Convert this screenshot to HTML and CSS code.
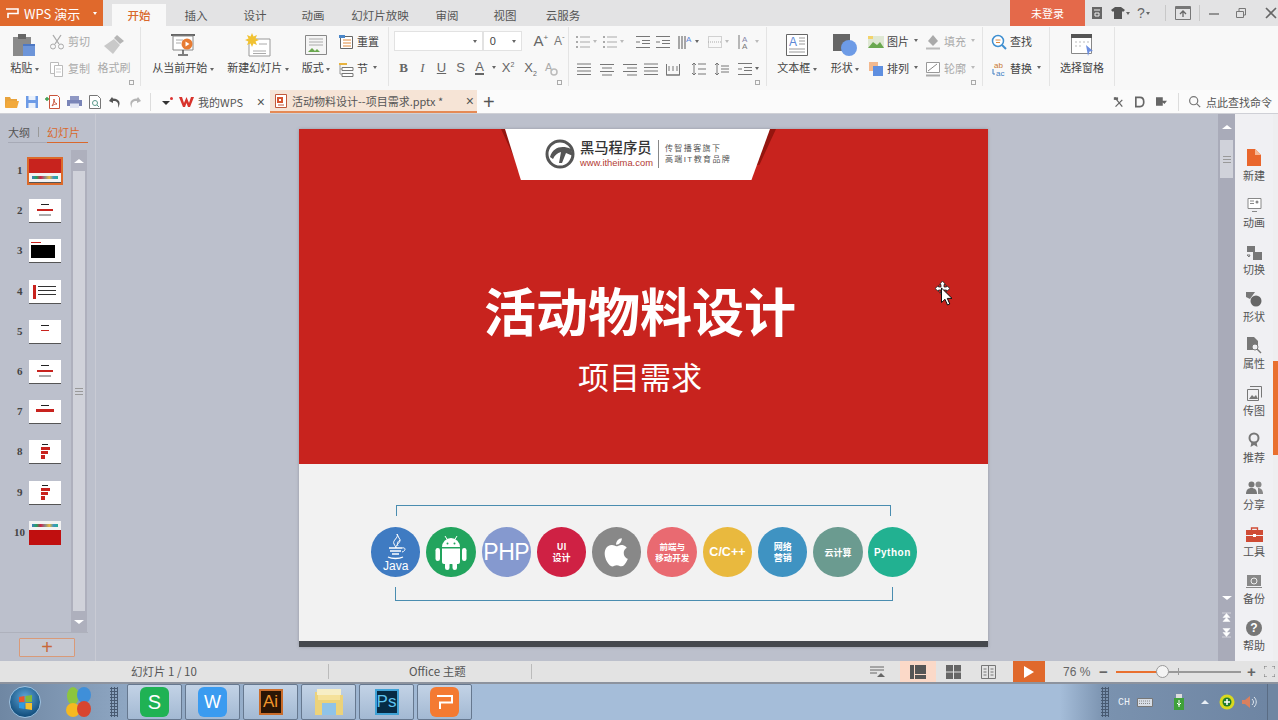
FILE: index.html
```html
<!DOCTYPE html><html lang="zh-CN">
<head>
<meta charset="UTF-8" />
<meta name="viewport" content="width=device-width, initial-scale=1" />
<title>WPS 演示</title>
<link rel="stylesheet" href="styles.css">
</head>
<body>
<svg class="defs" width="0" height="0">
  <symbol id="lines" viewBox="0 0 16 16"><path d="M1 3h14M1 6.500h14M1 10h14M1 13.500h14" stroke="currentColor" fill="none"/></symbol>
  <symbol id="bullets" viewBox="0 0 16 16"><path d="M1 2h2v2H1zM1 7h2v2H1zM1 12h2v2H1z" fill="currentColor"/><path d="M5 3h10M5 8h10M5 13h10" stroke="currentColor" fill="none"/></symbol>
  <symbol id="indent" viewBox="0 0 16 16"><path d="M1 2.500h14M7 6.500h8M7 9.500h8M1 13.500h14M1 8h4" stroke="currentColor" fill="none"/></symbol>
  <symbol id="search" viewBox="0 0 16 16"><circle cx="7" cy="7" r="5" fill="none" stroke="currentColor" stroke-width="1.500"/><path d="M11 11l4 4" stroke="currentColor" stroke-width="1.500"/></symbol>
</svg>

<div class="titlebar">
  <div class="appbtn">
    <svg width="15" height="12" viewBox="0 0 15 12"><path d="M1 2h12v4.500H3V11" fill="none" stroke="#fff" stroke-width="1.600"/></svg>
    <span class="appname">WPS 演示</span><i class="caret white"></i>
  </div>
  <div class="tabs">
    <span class="tab active">开始</span><span class="tab">插入</span><span class="tab">设计</span><span class="tab">动画</span><span class="tab">幻灯片放映</span><span class="tab">审阅</span><span class="tab">视图</span><span class="tab">云服务</span>
  </div>
  <div class="winctl">
    <span class="login">未登录</span>
    <svg class="w1" width="14" height="14" viewBox="0 0 14 14"><path d="M2 1h10v12H2z" fill="#666"/><path d="M4 4h6M5 7h4v3H5z" stroke="#eee" fill="none"/></svg>
    <svg class="w2" width="14" height="12" viewBox="0 0 14 12"><path d="M4 0h6l4 3-2 2-1-1v8H3V4L2 5 0 3z" fill="#555"/></svg><i class="caret"></i>
    <span class="help">?</span><i class="caret"></i>
    <span class="wsep first"></span>
    <svg width="16" height="14" viewBox="0 0 16 14"><path d="M.5.500h15v13H.5z" fill="none" stroke="#777"/><path d="M1 1h14v2H1z" fill="#777"/><path d="M8 11V5M5 8l3-3 3 3" fill="none" stroke="#666" stroke-width="1.300"/></svg>
    <span class="wsep"></span>
    <svg class="w3" width="12" height="12" viewBox="0 0 12 12"><path d="M1 7h10" stroke="#777" stroke-width="1.500"/></svg>
    <svg class="w4" width="12" height="12" viewBox="0 0 12 12"><path d="M1.500 4.500h7v6h-7zM4 4V1.500h6.500V8H9" fill="none" stroke="#777"/></svg>
    <svg class="w5" width="12" height="12" viewBox="0 0 12 12"><path d="M1 1l10 10M11 1L1 11" stroke="#666" stroke-width="1.600"/></svg>
  </div>
</div>

<div class="ribbon">
  <div class="group g1">
    <div class="big w49">
      <svg width="26" height="24" viewBox="0 0 26 24"><path d="M1 4h18v19H1z" fill="#8a8a8a"/><path d="M6 1h8v5H6z" fill="#666"/><path d="M11 11h12v12H11z" fill="#6d95d9"/><path d="M11 11h12v2H11z" fill="#4d78c4"/></svg>
      <span class="lbl">粘贴 <i class="caret"></i></span>
    </div>
    <div class="rows w46">
      <div class="sm off"><svg width="16" height="16" viewBox="0 0 16 16"><path d="M4 1l6 9M12 1L6 10" stroke="#aaa" stroke-width="1.300"/><circle cx="4" cy="12.500" r="2.500" fill="none" stroke="#aaa"/><circle cx="12" cy="12.500" r="2.500" fill="none" stroke="#aaa"/></svg>剪切</div>
      <div class="sm off"><svg width="16" height="16" viewBox="0 0 16 16"><path d="M1.500 1.500h8v11h-8z" fill="#fff" stroke="#bbb"/><path d="M5.500 4.500h8v11h-8z" fill="#fff" stroke="#bbb"/><path d="M7 8h5M7 11h5" stroke="#ccc"/></svg>复制</div>
    </div>
    <div class="big w38 off">
      <svg width="24" height="24" viewBox="0 0 24 24"><path d="M15 2l7 6-4 3-6-6z" fill="#b5b5b5"/><path d="M12 6l6 6-7 9-9-8z" fill="#c9c9c9"/></svg>
      <span class="lbl">格式刷</span>
    </div>
    <i class="launch"></i>
  </div>

  <div class="group g2">
    <div class="big w78">
      <svg width="26" height="24" viewBox="0 0 26 24"><path d="M1 1h24v2H1z" fill="#666"/><path d="M3 3h20v14H3z" fill="#fff" stroke="#888"/><path d="M6 7h7M6 10h5" stroke="#aaa"/><circle cx="17" cy="11" r="5.500" fill="#e77b32"/><path d="M15.500 8.500l4 2.500-4 2.500z" fill="#fff"/><path d="M13 17v4M8 22h10" stroke="#555" stroke-width="1.500"/></svg>
      <span class="lbl">从当前开始 <i class="caret"></i></span>
    </div>
    <div class="big w72">
      <svg width="26" height="24" viewBox="0 0 26 24"><path d="M4 6h21v17H4z" fill="#fff" stroke="#999"/><path d="M8 18h13M8 20.500h13M14 11h8" stroke="#aaa"/><path d="M7 0l1.500 3.500L12 2l-1.500 3.500L14 7l-3.500 1.500L12 12 8.500 10.500 7 14l-1.500-3.500L2 12l1.500-3.500L0 7l3.500-1.500L2 2l3.500 1.500z" fill="#f1c232"/></svg>
      <span class="lbl">新建幻灯片 <i class="caret"></i></span>
    </div>
    <div class="big w44">
      <svg width="24" height="24" viewBox="0 0 24 24"><path d="M1.500 2.500h21v19h-21z" fill="#f5f5f5" stroke="#888"/><path d="M5 6h14M5 9h14M5 12h14" stroke="#aaa"/><path d="M4 19l4-4 3 3 2-2 3 3z" fill="#6aa84f"/></svg>
      <span class="lbl">版式 <i class="caret"></i></span>
    </div>
    <div class="rows">
      <div class="sm"><svg width="16" height="16" viewBox="0 0 16 16"><path d="M2.500 2.500h12v12h-12z" fill="#fff" stroke="#666"/><path d="M5 6h8M5 9h8M5 12h8" stroke="#e08a3c"/><path d="M1 1h6v3H1z" fill="#4a86c8"/></svg>重置</div>
      <div class="sm"><svg width="16" height="16" viewBox="0 0 16 16"><path d="M4 6.500h11v3H4zM4 12.500h11v3H4z" fill="#fff" stroke="#777"/><path d="M1 2h8v2H1z" fill="#e8b33f"/><path d="M2 4v9h2M2 8h2" stroke="#999" fill="none"/></svg>节 <i class="caret"></i></div>
    </div>
  </div>

  <div class="group g3">
    <div class="fontrow">
      <span class="fbox fname"><i class="caret"></i></span>
      <span class="fbox fsize">0<i class="caret"></i></span>
      <span class="grow">A<sup>+</sup></span>
      <span class="grow small">A<sup>-</sup></span>
    </div>
    <div class="fmtrow">
      <b class="serif">B</b><em class="serif">I</em><u>U</u><span>S</span>
      <span class="acolor">A</span><i class="caret"></i>
      <span>X<sup>2</sup></span><span>X<sub>2</sub></span>
      <svg width="16" height="16" viewBox="0 0 16 16"><text x="2" y="11" font-size="11" fill="#aaa" font-family="Liberation Sans">A</text><circle cx="11" cy="12" r="3" fill="none" stroke="#bbb" stroke-width="1.500"/></svg>
    </div>
    <i class="launch"></i>
  </div>

  <div class="group g4">
    <div class="para p1">
      <span class="pc off"><svg width="16" height="16"><use href="#bullets"/></svg><i class="caret"></i></span>
      <span class="pc off"><svg width="16" height="16"><use href="#bullets"/></svg><i class="caret"></i></span>
      <span class="pc"><svg width="16" height="16"><use href="#indent"/></svg></span>
      <span class="pc"><svg width="16" height="16"><use href="#indent"/></svg></span>
      <span class="pc"><svg width="16" height="16" viewBox="0 0 16 16"><path d="M2 2v13M5 2v13M8 2v13" stroke="#555"/><text x="9" y="8" font-size="8" fill="#5b87d6" font-family="Liberation Sans">A</text></svg><i class="caret"></i></span>
      <span class="pc off"><svg width="16" height="16" viewBox="0 0 16 16"><path d="M1.500 2.500h13v11h-13z" fill="none" stroke="#aaa" stroke-dasharray="1 1"/><path d="M1 8h14" stroke="#aaa" stroke-dasharray="1 1"/></svg><i class="caret"></i></span>
      <span class="pc off"><svg width="16" height="16" viewBox="0 0 16 16"><path d="M2 1v14" stroke="#777"/><text x="5" y="8" font-size="8" fill="#88a" font-family="Liberation Sans">A</text><text x="5" y="15" font-size="8" fill="#777" font-family="Liberation Sans">A</text></svg><i class="caret"></i></span>
    </div>
    <div class="para p2">
      <svg width="16" height="16"><use href="#lines"/></svg>
      <svg width="16" height="16" viewBox="0 0 16 16"><path d="M1 3.500h14M3 7h10M1 10.500h14M3 14h10" stroke="currentColor"/></svg>
      <svg width="16" height="16" viewBox="0 0 16 16"><path d="M1 3.500h14M5 7h10M1 10.500h14M5 14h10" stroke="currentColor"/></svg>
      <svg width="16" height="16"><use href="#lines"/></svg>
      <svg width="16" height="16" viewBox="0 0 16 16"><path d="M1.500 3v11h13V3M1 14h14M4 5v5M8 5v5M12 5v5" fill="none" stroke="currentColor"/></svg>
      <svg width="16" height="16" viewBox="0 0 16 16"><path d="M3 2v12M1 4l2-2 2 2M1 12l2 2 2-2M7 3h8M7 8h8M7 13h8" fill="none" stroke="currentColor"/></svg>
      <svg width="16" height="16" viewBox="0 0 16 16"><path d="M3 2v12M1 4l2-2 2 2M1 12l2 2 2-2M7 5h8M7 8h8M7 11h8" fill="none" stroke="currentColor"/></svg>
      <span class="pc"><svg width="16" height="16"><use href="#indent"/></svg><i class="caret"></i></span>
    </div>
    <i class="launch"></i>
  </div>

  <div class="group g5">
    <div class="big w60">
      <svg width="24" height="24" viewBox="0 0 24 24"><path d="M1.500 1.500h21v21h-21z" fill="#fff" stroke="#666"/><text x="4" y="13" font-size="12" fill="#5b87d6" font-family="Liberation Sans">A</text><path d="M14 5h6M14 8h6M14 11h6M4 16h16M4 19h16" stroke="#999"/></svg>
      <span class="lbl">文本框 <i class="caret"></i></span>
    </div>
    <div class="big w36">
      <svg width="26" height="24" viewBox="0 0 26 24"><path d="M1 1h17v17H1z" fill="#666"/><circle cx="17" cy="15" r="8" fill="#6d9be6"/></svg>
      <span class="lbl">形状 <i class="caret"></i></span>
    </div>
    <div class="rows shapes1">
      <div class="sm"><svg width="16" height="16" viewBox="0 0 16 16"><path d="M0 2h16v12H0z" fill="#dfe8d4"/><path d="M0 14l5-6 4 3 3-3 4 6z" fill="#6aa84f"/><path d="M0 2h5v3H0z" fill="#f3d36b"/></svg>图片 <i class="caret"></i></div>
      <div class="sm"><svg width="16" height="16" viewBox="0 0 16 16"><path d="M1 1h9v9H1z" fill="#f3b98f"/><path d="M5 5h10v10H5z" fill="#5f8fe0"/></svg>排列 <i class="caret"></i></div>
    </div>
    <div class="rows shapes2 off">
      <div class="sm"><svg width="16" height="16" viewBox="0 0 16 16"><path d="M8 1l5 6-5 5-5-5z" fill="#aaa"/><path d="M1 13.500h14v2H1z" fill="#bbb"/></svg>填充 <i class="caret"></i></div>
      <div class="sm"><svg width="16" height="16" viewBox="0 0 16 16"><path d="M1.500 1.500h13v10h-13z" fill="#fff" stroke="#999"/><path d="M3 10l9-7" stroke="#888"/><path d="M1 13.500h14v2H1z" fill="#aaa"/></svg>轮廓 <i class="caret"></i></div>
    </div>
    <i class="launch"></i>
  </div>

  <div class="group g6">
    <div class="rows">
      <div class="sm"><svg width="16" height="16" viewBox="0 0 16 16"><circle cx="7" cy="7" r="5.500" fill="#fff" stroke="#3f8fd0" stroke-width="1.500"/><path d="M11 11l4 4" stroke="#3f8fd0" stroke-width="2"/><path d="M4.500 6h5M5 8.500h4" stroke="#e08a3c"/></svg>查找</div>
      <div class="sm"><svg class="repl" width="16" height="16" viewBox="0 0 16 16"><text x="3" y="7" font-size="8" fill="#c9772f" font-family="Liberation Sans">ab</text><text x="5" y="15" font-size="8" fill="#3f7fc4" font-family="Liberation Sans">ac</text><path d="M2 8v5h2" fill="none" stroke="#3f7fc4"/></svg>替换 <i class="caret"></i></div>
    </div>
  </div>

  <div class="group g7">
    <div class="big w65">
      <svg width="24" height="24" viewBox="0 0 24 24"><path d="M1.500 1.500h20v19h-20z" fill="#fff" stroke="#888"/><path d="M1 1h21v4H1z" fill="#555"/><path d="M5 9h2M9 9h2M13 9h2M17 9h2M5 13h2M9 13h2" stroke="#bbb"/><path d="M16 12l7 6-3.500.5L18 23z" fill="#6d8fe0"/></svg>
      <span class="lbl">选择窗格</span>
    </div>
  </div>
</div>

<div class="quickbar">
  <div class="qicons">
    <svg width="15" height="14" viewBox="0 0 15 14"><path d="M1 2h5l1 2h6v8H1z" fill="#e8a33d"/><path d="M3 6h12l-2 7H1z" fill="#f2a93b"/></svg>
    <svg width="14" height="14" viewBox="0 0 14 14"><path d="M1 1h12v12H1z" fill="#6d9be6"/><path d="M3.500 1h7v4h-7zM3.500 8h7v5h-7z" fill="#eaf1fb"/></svg>
    <svg width="16" height="14" viewBox="0 0 16 14"><path d="M4.500.500h8l2 2v11h-10z" fill="#fff" stroke="#c9543b"/><path d="M7 11c2-3 2-5 2-7 0 3 1 4 3 5-2 0-3 .5-5 2z" fill="none" stroke="#c9543b"/><path d="M0 4h4M2 2v4" stroke="#3a9d4a" stroke-width="1.400"/></svg>
    <svg width="15" height="14" viewBox="0 0 15 14"><path d="M3 1h9v4H3z" fill="#8f98c4"/><path d="M0 5h15v6H0z" fill="#7a85b8"/><path d="M3 8.500h9V13H3z" fill="#dfe3f2"/></svg>
    <svg width="14" height="14" viewBox="0 0 14 14"><path d="M1.500.500h8l3 3v10h-11z" fill="#fff" stroke="#777"/><circle cx="7" cy="8" r="2.500" fill="none" stroke="#5a9a8a"/><path d="M9 10l2 2" stroke="#5a9a8a"/></svg>
    <svg width="14" height="14" viewBox="0 0 14 14"><path d="M4 2L1 6l4 2V6c4-.5 6 2 5 7 3-5 2-9-5-9.500z" fill="#555"/></svg>
    <svg width="14" height="14" viewBox="0 0 14 14"><path d="M10 2l3 4-4 2V6C5 5.500 3 8 4 13 1 8 2 4 9 3.500z" fill="#b5b5b5"/></svg>
    <span class="qsep"></span>
    <span class="qmore"><i class="caret dark"></i><i class="dot"></i></span>
  </div>
  <div class="doctab">
    <svg class="wlogo" width="15" height="12" viewBox="0 0 15 12"><path d="M0 1h3l2 6 2.500-6 2.500 6 2-6h3l-4 10H9L7.500 7 6 11H4z" fill="#d8332c"/></svg>
    <span class="dname">我的WPS</span><span class="close">×</span>
  </div>
  <div class="doctab current">
    <svg width="12" height="14" viewBox="0 0 12 14"><path d="M.5.500h11v13H.5z" fill="#fff" stroke="#c0593a"/><path d="M2 3h6v6H2z" fill="#d7552f"/><path d="M4 5h2v2H4z" fill="#fff"/><path d="M3 11h6" stroke="#c0593a"/></svg>
    <span class="dname">活动物料设计--项目需求.pptx *</span><span class="close">×</span>
  </div>
  <span class="addtab">+</span>
  <div class="qright">
    <svg width="11" height="12" viewBox="0 0 13 13"><path d="M2 1l9 11M11 4L3 12" stroke="#666" stroke-width="1.500"/><path d="M1 1h5v3H1z" fill="#666"/></svg>
    <svg width="10" height="12" viewBox="0 0 12 13"><path d="M1 1h5c6 0 6 11 0 11H1z" fill="none" stroke="#666" stroke-width="2"/></svg>
    <svg width="11" height="12" viewBox="0 0 13 13"><path d="M0 1h8v4h5l-3 4-2-2v4H0z" fill="#666"/></svg>
    <span class="qsep"></span>
    <svg class="qs" width="13" height="13"><use href="#search"/></svg>
    <span>点此查找命令</span>
  </div>
</div>

<div class="main">
  <aside class="side">
    <div class="sidetabs"><span>大纲</span><i></i><span class="on">幻灯片</span></div>
    <div class="thumbs">
      <div class="list">
        <div class="trow sel"><b>1</b><div class="thumb t-cover"><i></i><i></i></div></div>
        <div class="trow"><b>2</b><div class="thumb t-a"><i class="k"></i><i class="r"></i><i class="g"></i></div></div>
        <div class="trow"><b>3</b><div class="thumb t-black"><i class="r"></i><i class="k"></i></div></div>
        <div class="trow"><b>4</b><div class="thumb t-cols"><i class="r"></i><i class="k"></i></div></div>
        <div class="trow"><b>5</b><div class="thumb t-a"><i class="k"></i><i class="r sm1"></i></div></div>
        <div class="trow"><b>6</b><div class="thumb t-a"><i class="k"></i><i class="r"></i><i class="g"></i></div></div>
        <div class="trow"><b>7</b><div class="thumb t-a t-wide"><i class="k"></i><i class="r"></i></div></div>
        <div class="trow"><b>8</b><div class="thumb t-f"><i class="k"></i><i class="r a1"></i><i class="r a2"></i><i class="r a3"></i></div></div>
        <div class="trow"><b>9</b><div class="thumb t-f"><i class="k"></i><i class="r a1"></i><i class="r a2"></i><i class="r a3"></i></div></div>
        <div class="trow"><b class="two">10</b><div class="thumb t-end"><i></i><i></i></div></div>
      </div>
      <div class="tscroll">
        <span class="sbtn"><i class="up"></i></span>
        <span class="strack"><i class="grip"></i></span>
        <span class="sbtn"><i class="down"></i></span>
      </div>
    </div>
    <div class="addslide"><span>+</span></div>
  </aside>

  <section class="canvas">
    <div class="slide">
      <div class="red">
        <div class="banner">
          <span class="wing"></span>
          <div class="bannerwhite">
            <svg class="horse" width="34" height="30" viewBox="0 0 34 30"><circle cx="16" cy="15" r="13" fill="#fff" stroke="#555" stroke-width="3"/><path d="M6 18C9 8 18 6 27 10l2 7-7-3-4 10h-3l2-11c-4 1-6 3-8 7z" fill="#555"/></svg>
            <div class="brand"><b>黑马程序员</b><span>www.itheima.com</span></div>
            <div class="slogan"><span>传智播客旗下</span><span>高端IT教育品牌</span></div>
          </div>
        </div>
        <h1>活动物料设计</h1>
        <p class="sub">项目需求</p>
      </div>
      <div class="lower">
        <div class="bracket top"></div>
        <div class="courses">
          <div class="course java">
            <svg width="22" height="26" viewBox="0 0 22 26"><path d="M12 0c2 4-5 6-3 10 1 2 2 3 2 4-1-4 7-6 3-10zM15 6c-3 2-3 4-2 6" fill="none" stroke="#fff"/><path d="M4 14h13M5 17h11M7 20h7M3 23c4 2 11 2 15 0" fill="none" stroke="#fff" stroke-width="1.300"/><path d="M17 14c4-1 4 3 0 4" fill="none" stroke="#fff"/></svg>
            <span>Java</span>
          </div>
          <div class="course android">
            <svg width="34" height="36" viewBox="0 0 34 36"><path d="M8 13a9 9 0 0 1 18 0z" fill="#fff"/><path d="M8 14.500h18V28a2 2 0 0 1-2 2H10a2 2 0 0 1-2-2z" fill="#fff"/><rect x="1.500" y="14" width="4.500" height="13" rx="2.200" fill="#fff"/><rect x="28" y="14" width="4.500" height="13" rx="2.200" fill="#fff"/><rect x="11" y="28" width="4.500" height="8" rx="2.200" fill="#fff"/><rect x="18.500" y="28" width="4.500" height="8" rx="2.200" fill="#fff"/><path d="M11 2l2.500 4M23 2l-2.500 4" stroke="#fff"/><circle cx="13.500" cy="9.500" r="1" fill="#22a45e"/><circle cx="20.500" cy="9.500" r="1" fill="#22a45e"/></svg>
          </div>
          <div class="course php">PHP</div>
          <div class="course ui"><span>UI</span><span>设计</span></div>
          <div class="course apple">
            <svg width="36" height="36" viewBox="0 0 24 24"><path d="M16.500 12.600c0-2.300 1.900-3.400 2-3.500-1.100-1.600-2.800-1.800-3.400-1.800-1.400-.1-2.800.9-3.500.9s-1.900-.9-3.100-.8c-1.600 0-3.100.9-3.900 2.300-1.700 2.900-.4 7.200 1.200 9.500.8 1.100 1.800 2.400 3 2.400s1.700-.8 3.100-.8 1.900.8 3.100.7c1.300 0 2.100-1.100 2.900-2.300.9-1.300 1.300-2.600 1.300-2.700-.1 0-2.700-1-2.700-3.900zM14.200 5.800c.6-.8 1.100-1.900 1-3-1 0-2.100.6-2.800 1.400-.6.700-1.100 1.800-1 2.900 1 .1 2.100-.5 2.800-1.300z" fill="#fff"/></svg>
          </div>
          <div class="course front"><span>前端与</span><span>移动开发</span></div>
          <div class="course cpp">C/C++</div>
          <div class="course net"><span>网络</span><span>营销</span></div>
          <div class="course cloud">云计算</div>
          <div class="course py">Python</div>
        </div>
        <div class="bracket bottom"></div>
      </div>
      <div class="footbar"></div>
      <svg class="cursor" width="18" height="26" viewBox="0 0 18 26"><path d="M7.500 0l3 3.500H9V6h2.500V4.500L15 7.500l-3.500 3V9H9v2.500h1.500L7.500 15l-3-3.500H6V9H3.500v1.500L0 7.500l3.500-3V6H6V3.500H4.500z" fill="#fff" stroke="#222" stroke-width=".8"/><path d="M6.500 7v14.500l3.500-3.200 2.500 5.700 2.300-1-2.500-5.600H17z" fill="#fff" stroke="#111"/></svg>
    </div>
  </section>

  <div class="vscroll">
    <span class="vup"><i class="up"></i></span>
    <span class="vthumb"><i class="grip"></i></span>
    <span class="vtrack"></span>
    <span class="vdown"><i class="down"></i></span>
    <svg class="vpage" width="9" height="15" viewBox="0 0 9 15"><path d="M0 3h9M4.500 3.500L8 7.500H1zM4.500 7.500L8 11.500H1z" fill="#fff" stroke="#fff" stroke-width=".5"/></svg>
    <svg class="vpage" width="9" height="15" viewBox="0 0 9 15"><path d="M0 12h9M4.500 11.500L8 7.500H1zM4.500 7.500L8 3.500H1z" fill="#fff" stroke="#fff" stroke-width=".5"/></svg>
  </div>

  <aside class="tools">
    <div class="toollist">
      <div class="tool hot"><svg width="14" height="17" viewBox="0 0 14 17"><path d="M0 0h8l6 6v11H0z" fill="#e9662c"/><path d="M8 0v6h6z" fill="#f6b896"/></svg>新建</div>
      <div class="tool"><svg width="15" height="16" viewBox="0 0 15 16"><path d="M1 1.500h13v10H1z" fill="#fff" stroke="#888"/><path d="M3 4h4M3 6.500h4M5 14.500h5" stroke="#888"/><circle cx="10" cy="5" r="1.500" fill="#888"/></svg>动画</div>
      <div class="tool"><svg width="16" height="14" viewBox="0 0 16 14"><path d="M1 0h8v6H1zM7 6h9v8H7z" fill="#777"/><path d="M4 9H1l2 2M4 9l-1 2" stroke="#777" fill="none"/></svg>切换</div>
      <div class="tool"><svg width="16" height="16" viewBox="0 0 16 16"><path d="M0 1h9L4 8 0 6z" fill="#777"/><circle cx="10" cy="10" r="5.500" fill="#666"/></svg>形状</div>
      <div class="tool"><svg width="15" height="17" viewBox="0 0 15 17"><path d="M0 0h7l4 4v9H0z" fill="#777"/><circle cx="8" cy="10" r="3" fill="#f0f0f3" stroke="#777"/><path d="M10 12l4 4" stroke="#777" stroke-width="1.400"/></svg>属性</div>
      <div class="tool"><svg width="15" height="15" viewBox="0 0 15 15"><path d="M.5 3.500h11v11H.5z" fill="none" stroke="#777"/><path d="M3 .5h11.500v11" fill="none" stroke="#777"/><path d="M2 13l3-4 2 2 2-2 2 4z" fill="#777"/></svg>传图</div>
      <div class="tool"><svg width="12" height="16" viewBox="0 0 12 16"><circle cx="6" cy="6" r="4.500" fill="none" stroke="#777" stroke-width="2"/><path d="M3.500 10l-1 5L6 13l3.500 2-1-5" fill="#777"/></svg>推荐</div>
      <div class="tool"><svg width="17" height="14" viewBox="0 0 17 14"><circle cx="5.500" cy="3.500" r="3" fill="#777"/><circle cx="12.500" cy="3.500" r="3" fill="#888"/><path d="M0 13c0-4 2-6 5.500-6s5.500 2 5.500 6z" fill="#777"/><path d="M12 7c3 0 5 2 5 6h-5z" fill="#888"/></svg>分享</div>
      <div class="tool"><svg width="17" height="15" viewBox="0 0 17 15"><path d="M5.500 3V1h6v2" fill="none" stroke="#cf4b35" stroke-width="1.300"/><path d="M0 3h17v5H0zM0 9h17v6H0z" fill="#cf4b35"/><path d="M7 7h3v3H7z" fill="#fff"/></svg>工具</div>
      <div class="tool"><svg width="16" height="15" viewBox="0 0 16 15"><path d="M1 1h14v11H1z" fill="#888"/><circle cx="8" cy="7" r="3" fill="none" stroke="#eee"/><path d="M0 13.500h16" stroke="#888"/></svg>备份</div>
      <div class="tool"><svg width="16" height="16" viewBox="0 0 16 16"><circle cx="8" cy="8" r="8" fill="#777"/><text x="8" y="12" font-size="12" font-weight="700" fill="#fff" text-anchor="middle" font-family="Liberation Sans">?</text></svg>帮助</div>
    </div>
    <div class="strip"><span class="stripon"></span></div>
  </aside>
</div>

<div class="status">
  <span class="st1">幻灯片 1 / 10</span>
  <span class="st2">Office 主题</span>
  <span class="st3"></span>
  <div class="stright">
    <svg class="notes" width="16" height="14" viewBox="0 0 16 14"><path d="M1 2h14M1 5h14M1 8h7" stroke="#666"/><path d="M8 12l4-4 4 4z" fill="#666"/></svg>
    <span class="view on"><svg width="16" height="14" viewBox="0 0 16 14"><path d="M0 0h4v14H0zM5 0h11v9H5zM5 10h11v4H5z" fill="#555"/></svg></span>
    <span class="view"><svg width="15" height="14" viewBox="0 0 15 14"><path d="M0 0h7v6.500H0zM8 0h7v6.500H8zM0 7.500h7V14H0zM8 7.500h7V14H8z" fill="#666"/></svg></span>
    <span class="view"><svg width="15" height="14" viewBox="0 0 15 14"><path d="M.5.500h14v13H.5zM7.500.500v13M2.500 4h3M2.500 7h3M2.500 10h3M9.500 4h3M9.500 7h3M9.500 10h3" fill="none" stroke="#777"/></svg></span>
    <span class="play"><i></i></span>
    <span class="zoompct">76 %</span>
    <span class="zbtn">−</span>
    <div class="slider"><i class="fill"></i><i class="knob"></i><i class="tick"></i></div>
    <span class="zbtn plus">+</span>
    <svg width="11" height="11" viewBox="0 0 11 11"><path d="M0 3V0h3M8 0h3v3M11 8v3H8M3 11H0V8" fill="none" stroke="#777"/></svg>
  </div>
</div>

<div class="taskbar">
  <div class="orb">
    <svg width="15" height="15" viewBox="0 0 15 15"><path d="M1 2l5.500-1v6H1z" fill="#e8552d"/><path d="M7.500 1L14 0v7H7.500z" fill="#7fba3c"/><path d="M1 8h5.500v6L1 13z" fill="#2f9ae0"/><path d="M7.500 8H14v7l-6.500-1z" fill="#f5c02e"/></svg>
  </div>
  <svg class="swirl" width="28" height="36" viewBox="0 0 28 36"><ellipse cx="9" cy="12" rx="6" ry="9" fill="#8cc63f"/><ellipse cx="20" cy="11" rx="7" ry="8" fill="#3f8fd9"/><ellipse cx="9" cy="26" rx="7" ry="7" fill="#f5b921"/><ellipse cx="20" cy="25" rx="7" ry="8" fill="#d8452f"/></svg>
  <span class="grip2"></span>
  <div class="taskbtns">
    <span class="tbtn"><span class="app s">S</span></span>
    <span class="tbtn"><span class="app w">W</span></span>
    <span class="tbtn"><span class="app ai">Ai</span></span>
    <span class="tbtn"><svg width="30" height="28" viewBox="0 0 30 28"><path d="M1 4h12l2 3h14v20H1z" fill="#ecd27a"/><path d="M3 1h24v6H3z" fill="#f7eec5"/><path d="M8 15h14v12H8z" fill="#8fc3e8"/><path d="M4 7h22v5H4z" fill="#f5e19a"/></svg></span>
    <span class="tbtn"><span class="app ps">Ps</span></span>
    <span class="tbtn"><span class="app p"><svg width="18" height="16" viewBox="0 0 18 16"><path d="M1 2h15v6.500H4V15" fill="none" stroke="#fff" stroke-width="2"/></svg></span></span>
  </div>
  <div class="tray">
    <span class="grip2"></span>
    <span class="ch">CH</span>
    <svg class="kbd" width="16" height="9" viewBox="0 0 16 9"><path d="M.5.500h15v8H.5z" fill="#d7dde5" stroke="#777"/><path d="M2 3h12M2 5.500h12" stroke="#888" stroke-dasharray="1 1"/></svg>
    <svg class="usb" width="10" height="16" viewBox="0 0 10 16"><path d="M2 0h6v4H2z" fill="#ddd"/><path d="M0 4h10v12H0z" fill="#3ea13a"/><path d="M5 6v7M3 9l2 2 2-2" fill="none" stroke="#fff"/></svg>
    <i class="trayup"></i>
    <svg class="plusball" width="16" height="16" viewBox="0 0 16 16"><circle cx="8" cy="8" r="7.500" fill="#d9d91f"/><circle cx="8" cy="8" r="4.500" fill="#1e7a2c"/><path d="M8 5v6M5 8h6" stroke="#fff" stroke-width="1.500"/></svg>
    <svg width="15" height="14" viewBox="0 0 15 14"><path d="M0 5h3l5-4v12L3 9H0z" fill="#d9805f"/><path d="M10 4c2 2 2 4 0 6M12 2c3 3 3 7 0 10" fill="none" stroke="#dfe6ee"/></svg>
    <span class="showdesk"></span>
  </div>
</div>

</body>
</html>
```

FILE: styles.css
```css
* { box-sizing: border-box; }
html, body { margin: 0; padding: 0; }
body {
  width: 1278px;
  height: 720px;
  overflow: hidden;
  font-family: "Noto Sans CJK SC", "Liberation Sans", sans-serif;
  font-size: 11px;
  color: #444;
  background: #bcc0cc;
}
.defs { position: absolute; }
i { display: block; }

.caret {
  display: inline-block;
  width: 0;
  height: 0;
  border: 2.5px solid transparent;
  border-top: 3px solid #666;
  border-bottom: 0;
  vertical-align: middle;
}
.caret.white { border-top-color: #fff; }
.caret.dark { border-top-color: #333; border-width: 4px 4px 0; }

/* title row */
.titlebar {
  height: 26px;
  display: flex;
  background: #e3e3e4;
}
.appbtn {
  width: 103px;
  flex: none;
  display: flex;
  align-items: center;
  padding-left: 5px;
  background: #e0692c;
  color: #fff;
  font-size: 13px;
}
.appname { width: 69px; margin-left: 4px; white-space: nowrap; }
.tabs {
  margin-left: 9px;
  display: grid;
  grid-template-columns: 54px 60px 58px 58px 76px 58px 58px 58px;
}
.tab {
  display: flex;
  align-items: center;
  justify-content: center;
  padding-top: 3px;
  font-size: 11.500px;
  color: #555;
}
.tab.active {
  margin-top: 4px;
  padding-top: 0;
  background: #f8f8f8;
  color: #d9682c;
  font-weight: 500;
}
.winctl {
  margin-left: auto;
  width: 268px;
  flex: none;
  display: flex;
  align-items: center;
}
.winctl > * { flex: none; }
.login {
  width: 75px;
  height: 26px;
  margin-right: 3px;
  line-height: 26px;
  text-align: center;
  color: #fff;
  background: #e4694a;
}
.w1 { margin: 0 7px 0 2px; }
.w2 { margin-right: 1px; }
.help { margin-left: 7px; margin-right: 1px; font: 14px "Liberation Sans", sans-serif; color: #666; }
.wsep { width: 1px; height: 16px; margin: 0 8px; background: #c8c8c8; }
.wsep.first { margin: 0 9px 0 15px; }
.w3 { margin: 0 15px 0 0; }
.w4 { margin-right: 18px; }

/* ribbon */
.ribbon {
  height: 64px;
  display: flex;
  padding-top: 1px;
  background: #f8f8f8;
}
.group {
  position: relative;
  height: 59px;
  display: flex;
  border-right: 1px solid #e4e4e4;
}
.g1 { width: 141px; }
.g2 { width: 248px; padding-left: 3px; }
.g3 { width: 180px; padding: 4px 0 0 5px; display: block; }
.g4 { width: 198px; padding-top: 1px; display: block; }
.g5 { width: 216px; }
.g6 { width: 67px; padding-left: 8px; }
.g7 { width: 65px; }
.big {
  display: flex;
  flex-direction: column;
  align-items: center;
  padding-top: 6px;
  white-space: nowrap;
}
.big svg { height: 24px; }
.lbl { margin-top: 2px; line-height: 16px; }
.w49 { width: 49px; }
.w46 { width: 46px; }
.w38 { width: 38px; }
.w78 { width: 78px; }
.w72 { width: 72px; }
.w44 { width: 44px; }
.w60 { width: 60px; }
.w36 { width: 36px; }
.w65 { width: 65px; }
.rows {
  display: grid;
  grid-auto-rows: 27px;
  white-space: nowrap;
}
.sm { display: flex; align-items: center; gap: 3px; }
.sm svg { position: relative; top: 1px; }
.sm .caret { margin-left: 2px; }
.off { color: #aaa; }
.off .caret { border-top-color: #bbb; }
.launch {
  position: absolute;
  right: 6px;
  bottom: 1px;
  width: 5px;
  height: 5px;
  border: 1px solid #aaa;
}
.shapes1 { width: 62px; padding-left: 5px; }
.shapes2 { width: 52px; }
.repl { flex: none; }

.fontrow { display: flex; height: 23px; align-items: flex-start; }
.fbox {
  height: 20px;
  display: flex;
  align-items: center;
  justify-content: flex-end;
  padding-right: 5px;
  border: 1px solid #e2e2e2;
  background: #fff;
  font: 11px "Liberation Sans", sans-serif;
}
.fname { width: 91px; }
.fsize { width: 40px; justify-content: space-between; padding-left: 6px; }
.grow {
  width: 18px;
  margin-left: 1px;
  font: 15px/20px "Liberation Sans", sans-serif;
  color: #666;
  text-align: center;
}
.fsize + .grow { margin-left: 10px; }
.grow.small { font-size: 12px; color: #777; }
.grow sup { font-size: 8px; line-height: 0; vertical-align: 6px; }
.fmtrow {
  height: 27px;
  display: grid;
  grid-template-columns: 19px 19px 19px 19px 19px 9px 20px 25px 16px;
  align-items: center;
  justify-items: center;
  font: 13px "Liberation Sans", sans-serif;
  color: #666;
}
.fmtrow sup, .fmtrow sub { font-size: 7px; line-height: 0; }
.serif { font-family: "Liberation Serif", serif; }
.acolor { border-bottom: 2px solid #666; line-height: 12px; }

.para { height: 27px; display: grid; align-items: center; color: #777; }
.p1 { padding-left: 6px; grid-template-columns: 27px 33px 20px 22px 30px 30px 22px; }
.p2 { padding-left: 7px; grid-template-columns: 23px 23px 21px 22px 26px 23px 23px 22px; }
.pc { display: flex; align-items: center; gap: 2px; }
.pc.off { color: #aaa; }

/* quick access row */
.quickbar {
  height: 24px;
  display: flex;
  align-items: center;
  background: #fbfbfb;
  border-bottom: 1px solid #cfd0d6;
}
.qicons {
  width: 176px;
  height: 23px;
  display: flex;
  align-items: center;
  gap: 6px;
  padding-left: 4px;
}
.qsep { width: 1px; height: 18px; background: #ddd; }
.qicons .qsep { margin-left: 2px; }
.qmore { position: relative; margin-left: 4px; width: 12px; height: 10px; }
.qmore .caret { position: absolute; left: 1px; top: 4px; }
.dot { position: absolute; right: 0; top: 0; width: 3px; height: 3px; border-radius: 50%; background: #d33; }
.doctab {
  height: 23px;
  display: flex;
  align-items: center;
  width: 92px;
  padding-left: 3px;
}
.wlogo { margin: 0 4px 0 0; }
.dname { color: #555; }
.close { margin-left: auto; margin-right: 3px; font: 14px "Liberation Sans", sans-serif; color: #555; }
.doctab.current {
  width: 207px;
  margin-left: 2px;
  padding-left: 5px;
  background: #f6e4d6;
  border-bottom: 2px solid #e58a55;
}
.current .dname { margin-left: 5px; }
.addtab { margin-left: 6px; font: 20px/20px "Liberation Sans", sans-serif; color: #555; }
.qright {
  margin-left: auto;
  display: flex;
  align-items: center;
  gap: 11px;
  padding-right: 6px;
  color: #555;
}
.qright .qsep { margin-right: -1px; }
.qs { color: #777; margin-right: -6px; margin-left: -1px; }

/* main */
.main { height: 547px; display: flex; }
.side {
  width: 96px;
  border-right: 1px solid #c9cbd4;
  display: flex;
  flex-direction: column;
}
.sidetabs {
  height: 29px;
  margin: 0 7px 0 8px;
  display: flex;
  gap: 8px;
  border-bottom: 1px solid #a7aab6;
  color: #555;
  line-height: 36px;
}
.sidetabs i { width: 1px; height: 10px; margin-top: 13px; background: #999; }
.sidetabs .on {
  color: #d9682c;
  border-bottom: 1px solid #d9682c;
  flex: 1;
  margin-bottom: -1px;
}
.thumbs { height: 490px; display: flex; border-bottom: 1px solid #aeb1bc; margin-right: 7px; padding-top: 7px; }
.list { width: 71px; padding-top: 9px; }
.trow {
  height: 40.200px;
  display: flex;
  align-items: flex-start;
  font: bold 11px/22px "Liberation Serif", serif;
  color: #444;
}
.trow b { width: 29px; padding-left: 17px; }
.trow b.two { padding-left: 14px; }
.thumb {
  position: relative;
  width: 32px;
  height: 24px;
  background: #fff;
  border-bottom: 1px solid #555;
  overflow: hidden;
}
.sel .thumb { outline: 2px solid #dc6a2a; background: #f2f2f2; }
.t-cover i:first-child { height: 14px; background: #c8231e; }
.t-cover i:last-child { height: 3px; margin: 3px 3px; background: linear-gradient(90deg, #3f7bc2, #22a45e, #cf2144, #888, #e9b93e, #3f93c2, #22b191); }
.thumb .k { position: absolute; left: 12px; top: 5px; width: 8px; height: 1px; background: #222; }
.thumb .r { position: absolute; left: 8px; top: 10px; width: 16px; height: 2px; background: #c8231e; }
.thumb .g { position: absolute; left: 10px; top: 15px; width: 12px; height: 2px; background: #aaa; }
.thumb .sm1 { left: 12px; width: 8px; height: 1px; }
.t-wide .r { left: 7px; width: 18px; height: 3px; top: 9px; }
.t-black .r { left: 2px; width: 10px; height: 1px; top: 3px; }
.t-black .k { left: 2px; top: 6px; width: 24px; height: 13px; background: #000; }
.t-cols .r { left: 4px; top: 5px; width: 3px; height: 14px; }
.t-cols .k { left: 9px; top: 6px; width: 18px; height: 10px; background: repeating-linear-gradient(#333 0 1px, #fff 1px 4px); }
.t-f .k { top: 4px; left: 13px; width: 6px; }
.t-f .a1 { left: 12px; top: 7px; width: 9px; height: 3px; }
.t-f .a2 { left: 12px; top: 11px; width: 7px; height: 3px; }
.t-f .a3 { left: 12px; top: 15px; width: 4px; height: 4px; }
.t-end { border: 0; background: #f2f2f2; }
.t-end i:first-child { height: 3px; margin: 3px 3px 3px; background: linear-gradient(90deg, #3f7bc2, #22a45e, #cf2144, #888, #e9b93e, #3f93c2, #22b191); }
.t-end i:last-child { height: 15px; background: #c00f0f; }

.tscroll {
  width: 16px;
  display: flex;
  flex-direction: column;
  background: #aeb0bd;
}
.sbtn { height: 21px; display: flex; align-items: center; justify-content: center; }
.strack {
  flex: 1;
  margin: 0 2px;
  display: flex;
  align-items: center;
  justify-content: center;
  background: #d0d2da;
}
.up, .down { width: 0; height: 0; border: 5px solid transparent; }
.up { border-top: 0; border-bottom: 4px solid #fff; }
.down { border-bottom: 0; border-top: 4px solid #fff; }
.grip {
  width: 8px;
  height: 7px;
  border-top: 1px solid #999;
  border-bottom: 1px solid #999;
  background: linear-gradient(#999, #999) center / 100% 1px no-repeat;
}
.addslide {
  margin: 5px 0 0 19px;
  width: 56px;
  height: 19px;
  border: 1px solid #d99a78;
  border-radius: 1px;
  background: #c6c8d1;
  text-align: center;
  font: 20px/16px "Liberation Sans", sans-serif;
  color: #c8683a;
}

.canvas { flex: 1; padding: 15px 0 0 203px; }
.slide {
  position: relative;
  width: 689px;
  height: 518px;
  background: #f2f2f2;
  box-shadow: 0 0 3px rgba(80, 80, 90, .35);
}
.red { height: 335px; background: #c8231e; text-align: center; }
.banner { position: relative; height: 51px; margin-bottom: 94px; }
.wing {
  position: absolute;
  left: 202px;
  top: 0;
  width: 275px;
  height: 51px;
  background: #94150f;
  clip-path: polygon(0 0, 100% 0, 94% 70%, 8% 100%, 6% 70%);
}
.bannerwhite {
  position: absolute;
  left: 206px;
  top: 0;
  width: 265px;
  height: 51px;
  display: flex;
  align-items: center;
  padding: 0 0 2px 39px;
  background: #fff;
  text-align: left;
  clip-path: polygon(0 0, 100% 0, 93% 100%, 6% 100%);
}
.horse { flex: none; }
.brand { display: flex; flex-direction: column; margin-left: 2px; padding-right: 5px; border-right: 1px solid #888; }
.brand b { font-family: "Liberation Sans", "Noto Sans CJK SC", sans-serif; font-size: 14.300px; font-weight: 500; line-height: 17px; color: #333; white-space: nowrap; }
.brand span { font: 9.400px/11px "Liberation Sans", sans-serif; color: #b33a33; white-space: nowrap; }
.slogan { display: flex; flex-direction: column; gap: 2px; margin-left: 6px; font: 8px/9px "Liberation Sans", "Noto Sans CJK SC", sans-serif; letter-spacing: 1.400px; color: #555; white-space: nowrap; }
.red h1 {
  margin: 0;
  padding-right: 7px;
  font-size: 52px;
  font-weight: 700;
  line-height: 72px;
  color: #fff;
}
.sub { margin: 0; font-size: 31px; line-height: 44px; color: #fff; padding: 8px 7px 0 0; }

.lower { height: 177px; padding-top: 41px; }
.bracket { border: 1px solid #4a8db0; }
.bracket.top { width: 495px; height: 11px; margin-left: 97px; border-bottom: 0; }
.bracket.bottom { width: 498px; height: 14px; margin: 10px 0 0 96px; border-top: 0; }
.courses { display: flex; gap: 6px; margin: 11px 0 0 72px; }
.course {
  flex: none;
  width: 49.300px;
  height: 50px;
  border-radius: 50%;
  display: flex;
  flex-direction: column;
  align-items: center;
  justify-content: center;
  color: #fff;
  font-size: 9px;
  font-weight: 700;
  line-height: 11px;
}
.java { background: #3f7bc2; font: 12px/12px "Liberation Sans", sans-serif; padding-top: 2px; }
.android { background: #22a45e; }
.php { background: #8599cf; font: 23px "Liberation Sans", sans-serif; letter-spacing: -.5px; }
.ui { background: #cf2144; }
.apple { background: #888; }
.front { background: #e96a71; font-size: 8.500px; }
.cpp { background: #e9b93e; font: bold 12.500px "Liberation Sans", sans-serif; }
.net { background: #3f93c2; }
.cloud { background: #6b9b90; }
.py { background: #22b191; font: bold 10px "Liberation Sans", sans-serif; letter-spacing: .5px; margin-left: -1px; }
.footbar { height: 6px; background: #45484d; }
.cursor { position: absolute; left: 636px; top: 152px; }

/* right scrollbar + tools */
.vscroll {
  width: 17px;
  display: flex;
  flex-direction: column;
  align-items: center;
  background: #a9abb9;
}
.vup { height: 26px; display: flex; align-items: center; }
.vthumb {
  width: 13px;
  height: 38px;
  display: flex;
  align-items: center;
  justify-content: center;
  background: #d0d2da;
}
.vtrack { flex: 1; }
.vdown { height: 24px; display: flex; align-items: center; }
.vpage { flex: none; }
.vpage:last-child { margin-bottom: 21px; }
.tools { width: 43px; display: flex; background: #f0f0f3; }
.toollist { width: 38px; padding-top: 35px; }
.tool {
  height: 47px;
  display: flex;
  flex-direction: column;
  align-items: center;
  justify-content: flex-end;
  padding-bottom: 3px;
  line-height: 14px;
  color: #555;
  white-space: nowrap;
}
.tool svg { margin-bottom: 2px; }
.toollist .tool:first-child { margin-top: -11px; }
.strip { flex: 1; background: #eeeef0; padding-top: 247px; }
.stripon { display: block; height: 94px; background: #e9702f; }

/* status */
.status {
  height: 23px;
  display: flex;
  align-items: center;
  background: #e3e3e3;
  color: #555;
  border-bottom: 2px solid #8d939e;
  font-size: 11.500px;
}
.st1 { width: 329px; padding-left: 131px; border-right: 1px solid #bbb; line-height: 15px; }
.st2 { width: 203px; padding-left: 80px; border-right: 1px solid #bbb; line-height: 15px; }
.stright {
  margin-left: auto;
  height: 21px;
  display: flex;
  align-items: center;
}
.notes { margin-right: 15px; }
.view { width: 36px; height: 21px; display: flex; align-items: center; justify-content: center; margin-right: -1px; }
.view.on { background: #fbd9c8; }
.play {
  width: 32px;
  height: 21px;
  margin: 0 18px 0 8px;
  display: flex;
  align-items: center;
  justify-content: center;
  background: #e0692c;
}
.play i { border: 6px solid transparent; border-left: 10px solid #fff; border-right: 0; }
.zoompct { width: 34px; font: 12px "Liberation Sans", sans-serif; color: #666; }
.zbtn { width: 13px; font: bold 15px/15px "Liberation Sans", sans-serif; color: #666; text-align: center; }
.zbtn.plus { margin: 0 6px 0 4px; }
.slider {
  position: relative;
  width: 125px;
  height: 2px;
  margin-left: 6px;
  background: #999;
}
.slider .fill { position: absolute; left: 0; top: 0; width: 41px; height: 2px; background: #e9702f; }
.slider .knob {
  position: absolute;
  left: 40px;
  top: -6px;
  width: 13px;
  height: 13px;
  border-radius: 50%;
  background: #f4f4f4;
  border: 1px solid #999;
}
.slider .tick { position: absolute; left: 62px; top: -3px; width: 1px; height: 7px; background: #999; }
.stright > svg:last-child { margin-right: 3px; }

/* taskbar */
.taskbar {
  height: 36px;
  display: flex;
  align-items: center;
  background: linear-gradient(90deg, #6f87a3 0, #8ea6c2 125px, #a5bdd9 480px, #a5bdd9 1060px, #7a92af 1105px, #6d84a2 1278px);
}
.orb {
  width: 32px;
  height: 32px;
  margin-left: 9px;
  display: flex;
  align-items: center;
  justify-content: center;
  border-radius: 50%;
  border: 1px solid #9cc1e0;
  background: radial-gradient(circle at 50% 35%, #5ea6d8, #14507f 75%);
}
.swirl { margin-left: 23px; }
.grip2 {
  width: 8px;
  height: 30px;
  margin-left: 18px;
  background: radial-gradient(circle, #485a72 1px, transparent 1.200px) 0 0 / 3px 3px;
}
.taskbtns { display: flex; gap: 3px; margin-left: 9px; }
.tbtn {
  width: 55px;
  height: 36px;
  display: flex;
  align-items: center;
  justify-content: center;
  border: 1px solid #66788f;
  border-radius: 2px;
  background: linear-gradient(#c3d3e6, #a3b9d3);
}
.app {
  width: 29px;
  height: 30px;
  display: flex;
  align-items: center;
  justify-content: center;
  border-radius: 6px;
  color: #fff;
  font: 17px "Liberation Sans", sans-serif;
}
.app.s { background: #1fb254; font-size: 20px; }
.app.w { background: #3a9bf0; font-size: 18px; }
.app.ai { width: 24px; height: 26px; border-radius: 0; background: #2a1505; border: 2px solid #c96c2b; color: #f0952c; }
.app.ps { width: 24px; height: 26px; border-radius: 0; background: #062b45; border: 2px solid #3fa2d6; color: #5ec3f0; }
.app.p { background: #f47a32; }
.tray { margin-left: auto; display: flex; align-items: center; height: 36px; }
.tray .grip2 { margin: 0 9px 0 0; }
.ch { font: 10px "Liberation Mono", monospace; color: #eef2f7; }
.kbd { margin: 0 21px 0 7px; }
.trayup {
  margin: 0 10px 0 17px;
  border: 4px solid transparent;
  border-top: 0;
  border-bottom: 4px solid #e8eef5;
}
.plusball { margin-right: 7px; }
.showdesk { width: 11px; height: 36px; margin-left: 10px; border-left: 1px solid #5a6c84; background: #6f86a2; }
```
